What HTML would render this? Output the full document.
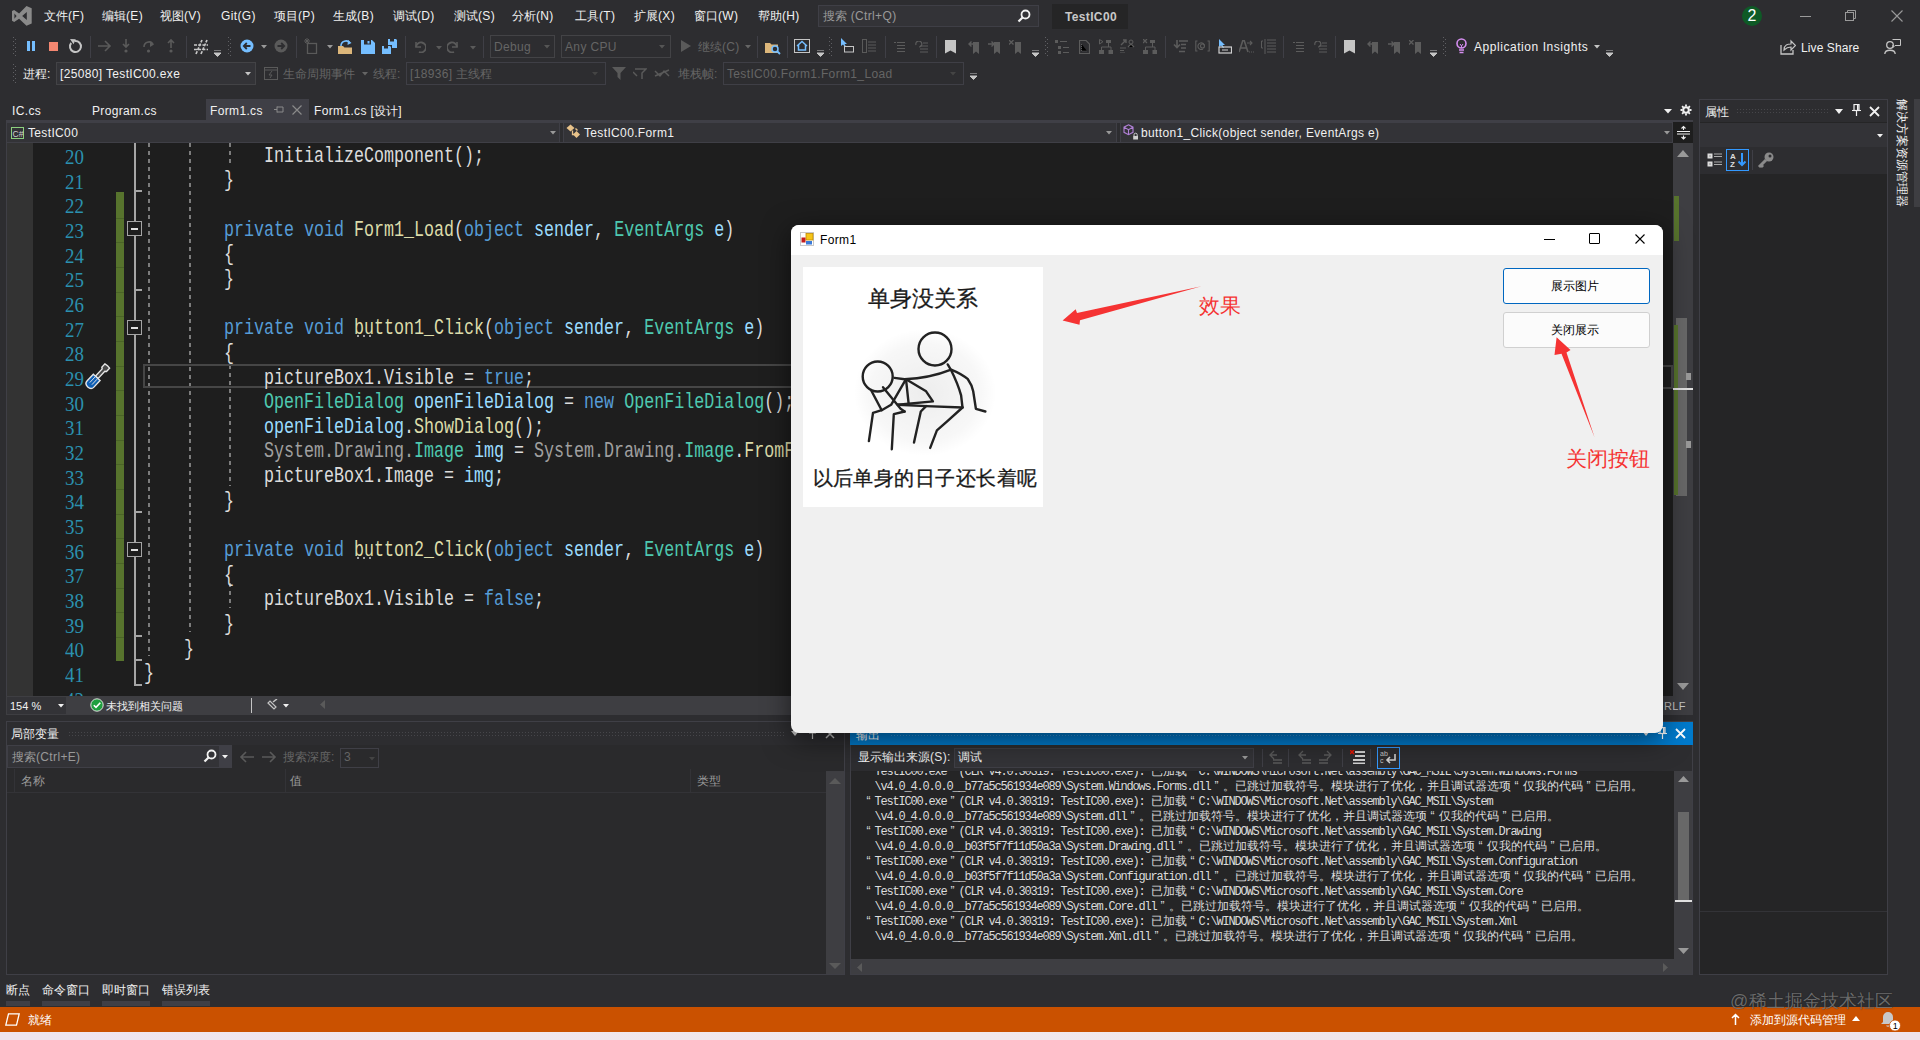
<!DOCTYPE html>
<html><head><meta charset="utf-8"><style>
*{box-sizing:border-box;margin:0;padding:0}
html,body{width:1920px;height:1040px;overflow:hidden}
body{background:#2d2d30;position:relative;font-family:"Liberation Sans",sans-serif;font-size:12px;color:#f1f1f1}
.a{position:absolute;white-space:nowrap}
.code{position:absolute;left:144px;top:144.6px;font-family:"Liberation Mono",monospace;font-size:22px;transform:scaleX(.7576);transform-origin:0 0;color:#dcdcdc}
.code div{height:24.67px;line-height:24.67px;white-space:pre}
.kw{color:#569cd6}.ty{color:#4ec9b0}.me{color:#dcdcaa}.pa{color:#9cdcfe}.gr{color:#a0a0a0}
.ln{position:absolute;font-family:"Liberation Serif",serif;font-size:21px;color:#2b91af;transform:scaleX(.9);transform-origin:100% 0;text-align:right;width:60px;line-height:24.67px;height:24.67px}
.out{position:absolute;font-family:"Liberation Mono",monospace;font-size:12px;line-height:15px;color:#dcdcdc;white-space:pre}
.out i{font-style:normal;display:inline-block;width:12px;text-align:center;font-family:"Liberation Sans",sans-serif}
.out b{font-weight:normal;letter-spacing:-1.2px}
</style></head><body>
<svg class="a" style="left:11px;top:5px;" width="22" height="22" viewBox="0 0 22 22"><path d="M15.5 1 L20.7 3.2 V18.5 L15.5 20.7 L8.1 13.7 L3.15 16.9 L1 15.8 V5.9 L3.15 5.1 L8.1 8.6 Z M15.8 7 V15 L11.2 11 Z M3.4 8.6 V13.7 L5.6 11.1 Z" fill="#8a8a8a" fill-rule="evenodd"/></svg>
<div class="a" style="left:44px;top:10.34px;font-size:12px;line-height:12px;color:#f1f1f1;">文件<span style="letter-spacing:0.35px">(F)</span></div>
<div class="a" style="left:102px;top:10.34px;font-size:12px;line-height:12px;color:#f1f1f1;">编辑<span style="letter-spacing:0.35px">(E)</span></div>
<div class="a" style="left:160px;top:10.34px;font-size:12px;line-height:12px;color:#f1f1f1;">视图<span style="letter-spacing:0.35px">(V)</span></div>
<div class="a" style="left:221px;top:10.34px;font-size:12px;line-height:12px;color:#f1f1f1;"><span style="letter-spacing:0.35px">Git(G)</span></div>
<div class="a" style="left:274px;top:10.34px;font-size:12px;line-height:12px;color:#f1f1f1;">项目<span style="letter-spacing:0.35px">(P)</span></div>
<div class="a" style="left:333px;top:10.34px;font-size:12px;line-height:12px;color:#f1f1f1;">生成<span style="letter-spacing:0.35px">(B)</span></div>
<div class="a" style="left:393px;top:10.34px;font-size:12px;line-height:12px;color:#f1f1f1;">调试<span style="letter-spacing:0.35px">(D)</span></div>
<div class="a" style="left:454px;top:10.34px;font-size:12px;line-height:12px;color:#f1f1f1;">测试<span style="letter-spacing:0.35px">(S)</span></div>
<div class="a" style="left:512px;top:10.34px;font-size:12px;line-height:12px;color:#f1f1f1;">分析<span style="letter-spacing:0.35px">(N)</span></div>
<div class="a" style="left:575px;top:10.34px;font-size:12px;line-height:12px;color:#f1f1f1;">工具<span style="letter-spacing:0.35px">(T)</span></div>
<div class="a" style="left:634px;top:10.34px;font-size:12px;line-height:12px;color:#f1f1f1;">扩展<span style="letter-spacing:0.35px">(X)</span></div>
<div class="a" style="left:694px;top:10.34px;font-size:12px;line-height:12px;color:#f1f1f1;">窗口<span style="letter-spacing:0.35px">(W)</span></div>
<div class="a" style="left:758px;top:10.34px;font-size:12px;line-height:12px;color:#f1f1f1;">帮助<span style="letter-spacing:0.35px">(H)</span></div>
<div class="a" style="left:818px;top:5px;width:221px;height:22px;background:#333337;border:1px solid #3f3f46;"></div>
<div class="a" style="left:823px;top:10.34px;font-size:12px;line-height:12px;color:#999999;">搜索<span style="letter-spacing:0.35px"> (Ctrl+Q)</span></div>
<svg class="a" style="left:1017px;top:9px;" width="14" height="14" viewBox="0 0 14 14"><circle cx="8.5" cy="5.5" r="4" fill="none" stroke="#f1f1f1" stroke-width="1.8"/><path d="M5.8 8.2 L1.5 12.5" stroke="#f1f1f1" stroke-width="2.2"/></svg>
<div class="a" style="left:1052px;top:4px;width:76px;height:25px;background:#252526;"></div>
<div class="a" style="left:1065px;top:10.84px;font-size:12px;line-height:12px;color:#c8c8c8;font-weight:bold;"><span style="letter-spacing:0.35px">TestIC00</span></div>
<div class="a" style="left:1742px;top:6px;width:20px;height:20px;border-radius:10px;background:#0e5a26;color:#fff;font-size:16px;line-height:20px;text-align:center">2</div>
<div class="a" style="left:1800px;top:16px;width:11px;height:1px;background:#9a9a9a;"></div>
<svg class="a" style="left:1845px;top:10px;" width="12" height="12" viewBox="0 0 12 12"><rect x="0.5" y="2.5" width="8" height="8" fill="none" stroke="#9a9a9a"/><path d="M2.5 2.5 V0.5 H10.5 V8.5 H8.5" fill="none" stroke="#9a9a9a"/></svg>
<svg class="a" style="left:1891px;top:10px;" width="12" height="12" viewBox="0 0 12 12"><path d="M0.5 0.5 L11.5 11.5 M11.5 0.5 L0.5 11.5" stroke="#9a9a9a" stroke-width="1.1"/></svg>
<svg class="a" style="left:13px;top:37px;" width="3" height="20" viewBox="0 0 3 20"><rect x="0" y="0" width="1" height="1" fill="#606064"/><rect x="2" y="2" width="1" height="1" fill="#606064"/><rect x="0" y="4" width="1" height="1" fill="#606064"/><rect x="2" y="6" width="1" height="1" fill="#606064"/><rect x="0" y="8" width="1" height="1" fill="#606064"/><rect x="2" y="10" width="1" height="1" fill="#606064"/><rect x="0" y="12" width="1" height="1" fill="#606064"/><rect x="2" y="14" width="1" height="1" fill="#606064"/><rect x="0" y="16" width="1" height="1" fill="#606064"/><rect x="2" y="18" width="1" height="1" fill="#606064"/></svg>
<div class="a" style="left:27px;top:41px;width:3px;height:10px;background:#75beff;"></div>
<div class="a" style="left:32px;top:41px;width:3px;height:10px;background:#75beff;"></div>
<div class="a" style="left:49px;top:42px;width:9px;height:9px;background:#f48771;"></div>
<svg class="a" style="left:67px;top:38px;" width="16" height="16" viewBox="0 0 16 16"><path d="M4.2 5 A5.5 5.5 0 1 0 8 3" fill="none" stroke="#c5c5c5" stroke-width="2"/><path d="M3 1 L8.8 1.2 L6.5 6.2Z" fill="#c5c5c5"/></svg>
<div class="a" style="left:90px;top:36px;width:1px;height:22px;background:#3f3f46;"></div>
<svg class="a" style="left:97px;top:39px;" width="16" height="14" viewBox="0 0 16 14"><path d="M1 7 H13 M8 2 L13 7 L8 12" fill="none" stroke="#5a5a5a" stroke-width="1.6"/></svg>
<svg class="a" style="left:121px;top:38px;" width="10" height="16" viewBox="0 0 10 16"><path d="M5 1 V9 M2 6 L5 9 L8 6" fill="none" stroke="#5a5a5a" stroke-width="1.6"/><circle cx="5" cy="13" r="1.6" fill="#5a5a5a"/></svg>
<svg class="a" style="left:142px;top:38px;" width="14" height="16" viewBox="0 0 14 16"><path d="M2 9 A5 5 0 0 1 11 6" fill="none" stroke="#5a5a5a" stroke-width="1.6"/><path d="M8 3 L12 6.5 L8 9" fill="#5a5a5a"/><circle cx="6.5" cy="13" r="1.6" fill="#5a5a5a"/></svg>
<svg class="a" style="left:166px;top:38px;" width="10" height="16" viewBox="0 0 10 16"><path d="M5 10 V2 M2 5 L5 2 L8 5" fill="none" stroke="#5a5a5a" stroke-width="1.6"/><circle cx="5" cy="13" r="1.6" fill="#5a5a5a"/></svg>
<div class="a" style="left:186px;top:36px;width:1px;height:22px;background:#3f3f46;"></div>
<svg class="a" style="left:193px;top:39px;" width="16" height="16" viewBox="0 0 16 16"><path d="M3 15 L9 1 M8 15 L14 1 M1 6 H15 M1 10.5 H15" stroke="#c8c8c8" stroke-width="1.7" stroke-dasharray="3 1.2"/></svg>
<svg class="a" style="left:214px;top:50px;" width="7" height="7" viewBox="0 0 7 7"><path d="M0 0 H7 M0 3 H7 L3.5 6.5Z" stroke="#c5c5c5" fill="#c5c5c5" stroke-width="1"/></svg>
<svg class="a" style="left:228px;top:37px;" width="3" height="20" viewBox="0 0 3 20"><rect x="0" y="0" width="1" height="1" fill="#606064"/><rect x="2" y="2" width="1" height="1" fill="#606064"/><rect x="0" y="4" width="1" height="1" fill="#606064"/><rect x="2" y="6" width="1" height="1" fill="#606064"/><rect x="0" y="8" width="1" height="1" fill="#606064"/><rect x="2" y="10" width="1" height="1" fill="#606064"/><rect x="0" y="12" width="1" height="1" fill="#606064"/><rect x="2" y="14" width="1" height="1" fill="#606064"/><rect x="0" y="16" width="1" height="1" fill="#606064"/><rect x="2" y="18" width="1" height="1" fill="#606064"/></svg>
<svg class="a" style="left:240px;top:39px;" width="14" height="14" viewBox="0 0 14 14"><circle cx="7" cy="7" r="6.5" fill="#75beff"/><path d="M10.5 7 H4 M6.8 4 L3.8 7 L6.8 10" fill="none" stroke="#2d2d30" stroke-width="1.8"/></svg>
<svg class="a" style="left:261px;top:45px;" width="6" height="4" viewBox="0 0 6 4"><path d="M0 0 H6 L3 3.5Z" fill="#999"/></svg>
<svg class="a" style="left:274px;top:39px;" width="14" height="14" viewBox="0 0 14 14"><circle cx="7" cy="7" r="6.5" fill="#5a5a5a"/><path d="M3.5 7 H10 M7.2 4 L10.2 7 L7.2 10" fill="none" stroke="#2d2d30" stroke-width="1.8"/></svg>
<div class="a" style="left:296px;top:36px;width:1px;height:22px;background:#3f3f46;"></div>
<svg class="a" style="left:304px;top:38px;" width="14" height="16" viewBox="0 0 14 16"><rect x="3.5" y="5.5" width="9" height="10" fill="none" stroke="#5a5a5a" stroke-width="1.3"/><path d="M1 1 L5 5 M1 5 L5 1 M3 0 V6 M0 3 H6" stroke="#5a5a5a"/></svg>
<svg class="a" style="left:327px;top:45px;" width="6" height="4" viewBox="0 0 6 4"><path d="M0 0 H6 L3 3.5Z" fill="#999"/></svg>
<svg class="a" style="left:337px;top:39px;" width="18" height="16" viewBox="0 0 18 16"><path d="M1 7 H6 L7.5 8.5 H15 V15 H1 Z" fill="#dcb67a"/><path d="M4 7 A5 5 0 0 1 13 4" fill="none" stroke="#75beff" stroke-width="1.6"/><path d="M11 1 L14.5 4 L10.5 6Z" fill="#75beff"/></svg>
<svg class="a" style="left:361px;top:40px;" width="14" height="14" viewBox="0 0 14 14"><path d="M0 0 H11 L14 3 V14 H0Z" fill="#75beff"/><rect x="3" y="0" width="7" height="4.5" fill="#2d2d30"/><rect x="6.5" y="1" width="2" height="2.5" fill="#75beff"/></svg>
<svg class="a" style="left:382px;top:39px;" width="16" height="16" viewBox="0 0 16 16"><path d="M0 7 H8 L9 8 V15 H0Z" fill="#75beff"/><path d="M6 0 H14 L15 1 V9 H10 V6 H6Z" fill="#75beff"/><rect x="2" y="7" width="4" height="2.5" fill="#2d2d30"/><rect x="8" y="0" width="4" height="2.5" fill="#2d2d30"/></svg>
<div class="a" style="left:405px;top:36px;width:1px;height:22px;background:#3f3f46;"></div>
<svg class="a" style="left:413px;top:39px;" width="13" height="14" viewBox="0 0 13 14"><path d="M3 3 V8 H8" fill="none" stroke="#5a5a5a" stroke-width="1.6"/><path d="M3 8 A5 5 0 1 1 6 13" fill="none" stroke="#5a5a5a" stroke-width="1.8"/></svg>
<svg class="a" style="left:436px;top:46px;" width="6" height="4" viewBox="0 0 6 4"><path d="M0 0 H6 L3 3.5Z" fill="#5a5a5a"/></svg>
<svg class="a" style="left:447px;top:39px;" width="13" height="14" viewBox="0 0 13 14"><path d="M10 3 V8 H5" fill="none" stroke="#5a5a5a" stroke-width="1.6"/><path d="M10 8 A5 5 0 1 0 7 13" fill="none" stroke="#5a5a5a" stroke-width="1.8"/></svg>
<svg class="a" style="left:470px;top:46px;" width="6" height="4" viewBox="0 0 6 4"><path d="M0 0 H6 L3 3.5Z" fill="#5a5a5a"/></svg>
<div class="a" style="left:483px;top:36px;width:1px;height:22px;background:#3f3f46;"></div>
<div class="a" style="left:490px;top:35px;width:65px;height:23px;border:1px solid #434346;"></div>
<div class="a" style="left:494px;top:41.34px;font-size:12px;line-height:12px;color:#656565;"><span style="letter-spacing:0.35px">Debug</span></div>
<svg class="a" style="left:544px;top:45px;" width="6" height="4" viewBox="0 0 6 4"><path d="M0 0 H6 L3 3.5Z" fill="#555"/></svg>
<div class="a" style="left:561px;top:35px;width:110px;height:23px;border:1px solid #434346;"></div>
<div class="a" style="left:565px;top:41.34px;font-size:12px;line-height:12px;color:#656565;"><span style="letter-spacing:0.35px">Any CPU</span></div>
<svg class="a" style="left:659px;top:45px;" width="6" height="4" viewBox="0 0 6 4"><path d="M0 0 H6 L3 3.5Z" fill="#555"/></svg>
<svg class="a" style="left:681px;top:40px;" width="10" height="12" viewBox="0 0 10 12"><path d="M0 0 L10 6 L0 12Z" fill="#5a5a5a"/></svg>
<div class="a" style="left:698px;top:41.34px;font-size:12px;line-height:12px;color:#656565;">继续<span style="letter-spacing:0.35px">(C)</span></div>
<svg class="a" style="left:745px;top:45px;" width="6" height="4" viewBox="0 0 6 4"><path d="M0 0 H6 L3 3.5Z" fill="#656565"/></svg>
<div class="a" style="left:757px;top:36px;width:1px;height:22px;background:#3f3f46;"></div>
<svg class="a" style="left:765px;top:39px;" width="16" height="16" viewBox="0 0 16 16"><path d="M0 4 H5 L6.5 5.5 H13 V14 H0Z" fill="#dcb67a"/><circle cx="10" cy="10" r="3" fill="#2d2d30" stroke="#75beff" stroke-width="1.5"/><path d="M12 12 L15 15" stroke="#75beff" stroke-width="1.8"/></svg>
<div class="a" style="left:787px;top:36px;width:1px;height:22px;background:#3f3f46;"></div>
<svg class="a" style="left:794px;top:39px;" width="16" height="14" viewBox="0 0 16 14"><rect x="0.5" y="0.5" width="15" height="13" fill="none" stroke="#c5c5c5"/><path d="M3 7 L8 2.5 L13 7 M4.5 6 V11 H11.5 V6" fill="none" stroke="#75beff" stroke-width="1.5"/></svg>
<svg class="a" style="left:817px;top:50px;" width="7" height="7" viewBox="0 0 7 7"><path d="M0 0 H7 M0 3 H7 L3.5 6.5Z" stroke="#c5c5c5" fill="#c5c5c5"/></svg>
<svg class="a" style="left:829px;top:37px;" width="3" height="20" viewBox="0 0 3 20"><rect x="0" y="0" width="1" height="1" fill="#606064"/><rect x="2" y="2" width="1" height="1" fill="#606064"/><rect x="0" y="4" width="1" height="1" fill="#606064"/><rect x="2" y="6" width="1" height="1" fill="#606064"/><rect x="0" y="8" width="1" height="1" fill="#606064"/><rect x="2" y="10" width="1" height="1" fill="#606064"/><rect x="0" y="12" width="1" height="1" fill="#606064"/><rect x="2" y="14" width="1" height="1" fill="#606064"/><rect x="0" y="16" width="1" height="1" fill="#606064"/><rect x="2" y="18" width="1" height="1" fill="#606064"/></svg>
<svg class="a" style="left:840px;top:38px;" width="14" height="15" viewBox="0 0 14 15"><path d="M1 0 L1 8 L3 6.5 L5 9 L6 8.5 L4.5 6 L7 6Z" fill="#75beff"/><rect x="4.5" y="8.5" width="9" height="5.5" fill="none" stroke="#c5c5c5"/></svg>
<svg class="a" style="left:862px;top:39px;" width="14" height="14" viewBox="0 0 14 14"><rect x="0.5" y="0.5" width="4" height="13" fill="none" stroke="#5a5a5a"/><path d="M6 3 H14 M6 6 H14 M6 9 H14 M6 12 H14" stroke="#5a5a5a"/></svg>
<div class="a" style="left:885px;top:36px;width:1px;height:22px;background:#3f3f46;"></div>
<svg class="a" style="left:894px;top:42px;" width="11" height="10" viewBox="0 0 11 10"><path d="M0 0.5 H2 M3 0.5 H11 M3 3.5 H11 M3 6.5 H11 M3 9.5 H11" stroke="#5c5c5c" stroke-width="1.2"/></svg>
<svg class="a" style="left:915px;top:41px;" width="13" height="12" viewBox="0 0 13 12"><path d="M1 4 A3 3 0 1 1 4 6" fill="none" stroke="#5c5c5c" stroke-width="1.2"/><path d="M5 5 H13 M5 8 H13 M5 11 H13 M8 2 H13" stroke="#5c5c5c" stroke-width="1.2"/></svg>
<div class="a" style="left:936px;top:36px;width:1px;height:22px;background:#3f3f46;"></div>
<svg class="a" style="left:945px;top:40px;" width="11" height="14" viewBox="0 0 11 14"><path d="M0 0 H11 V13.5 L5.5 10.5 L0 13.5Z" fill="#c5c5c5"/></svg>
<svg class="a" style="left:968px;top:40px;" width="12" height="14" viewBox="0 0 12 14"><path d="M5 2 H11 V14 L8 11.5 L5 14Z" fill="#5c5c5c"/><path d="M7 4 H1 M3.5 1.5 L1 4 L3.5 6.5" fill="none" stroke="#5c5c5c" stroke-width="1.4"/></svg>
<svg class="a" style="left:988px;top:40px;" width="13" height="14" viewBox="0 0 13 14"><path d="M6 2 H12 V14 L9 11.5 L6 14Z" fill="#5c5c5c"/><path d="M0 4 H6 M3.5 1.5 L6 4 L3.5 6.5" fill="none" stroke="#5c5c5c" stroke-width="1.4"/></svg>
<svg class="a" style="left:1009px;top:40px;" width="13" height="14" viewBox="0 0 13 14"><path d="M6 2 H12 V14 L9 11.5 L6 14Z" fill="#5c5c5c"/><path d="M0 0 L4.5 4.5 M4.5 0 L0 4.5" stroke="#5c5c5c" stroke-width="1.3"/></svg>
<svg class="a" style="left:1032px;top:50px;" width="7" height="7" viewBox="0 0 7 7"><path d="M0 0 H7 M0 3 H7 L3.5 6.5Z" stroke="#c5c5c5" fill="#c5c5c5"/></svg>
<svg class="a" style="left:1045px;top:37px;" width="3" height="20" viewBox="0 0 3 20"><rect x="0" y="0" width="1" height="1" fill="#606064"/><rect x="2" y="2" width="1" height="1" fill="#606064"/><rect x="0" y="4" width="1" height="1" fill="#606064"/><rect x="2" y="6" width="1" height="1" fill="#606064"/><rect x="0" y="8" width="1" height="1" fill="#606064"/><rect x="2" y="10" width="1" height="1" fill="#606064"/><rect x="0" y="12" width="1" height="1" fill="#606064"/><rect x="2" y="14" width="1" height="1" fill="#606064"/><rect x="0" y="16" width="1" height="1" fill="#606064"/><rect x="2" y="18" width="1" height="1" fill="#606064"/></svg>
<svg class="a" style="left:1055px;top:40px;" width="14" height="14" viewBox="0 0 14 14"><rect x="0" y="0" width="3" height="3" fill="#5c5c5c"/><rect x="3" y="6" width="3" height="3" fill="#5c5c5c"/><rect x="3" y="11" width="3" height="3" fill="#5c5c5c"/><path d="M5 1.5 H12 M8 7.5 H14 M8 12.5 H14" stroke="#5c5c5c" stroke-width="1.2"/></svg>
<svg class="a" style="left:1079px;top:40px;" width="11" height="14" viewBox="0 0 11 14"><path d="M0.5 0.5 H7 L10.5 4 V13.5 H0.5Z" fill="none" stroke="#5c5c5c" stroke-width="1.2"/><path d="M2.5 4 V11 H8" stroke="#5c5c5c" stroke-dasharray="1 1"/></svg>
<svg class="a" style="left:1099px;top:39px;" width="14" height="15" viewBox="0 0 14 15"><path d="M0.5 0.5 V5 L4 2.7Z" fill="none" stroke="#5c5c5c"/><rect x="7" y="1" width="5" height="3" fill="#5c5c5c"/><path d="M9.5 4 V8 M2.5 8 H12 M2.5 8 V11 M12 8 V11" stroke="#5c5c5c"/><rect x="0" y="11" width="5" height="4" fill="#5c5c5c"/><rect x="9.5" y="11" width="5" height="4" fill="#5c5c5c"/></svg>
<svg class="a" style="left:1120px;top:39px;" width="15" height="14" viewBox="0 0 15 14"><path d="M1 6 L6 1 M3 1 H6 V4" fill="none" stroke="#5c5c5c" stroke-width="1.4"/><circle cx="11" cy="3" r="2" fill="none" stroke="#5c5c5c"/><path d="M8 8 L11 5 L14 8 M0 9 H6 M0 11.5 H4 M0 14 H5" stroke="#5c5c5c" stroke-width="1.2"/></svg>
<svg class="a" style="left:1143px;top:39px;" width="14" height="15" viewBox="0 0 14 15"><path d="M0 0 L4 4 M4 0 L0 4" stroke="#5c5c5c" stroke-width="1.3"/><rect x="7" y="1" width="5" height="3" fill="#5c5c5c"/><path d="M9.5 4 V8 M2.5 8 H12 M2.5 8 V11 M12 8 V11" stroke="#5c5c5c"/><rect x="0" y="11" width="5" height="4" fill="#5c5c5c"/><rect x="9.5" y="11" width="5" height="4" fill="#5c5c5c"/></svg>
<div class="a" style="left:1165px;top:36px;width:1px;height:22px;background:#3f3f46;"></div>
<svg class="a" style="left:1173px;top:40px;" width="15" height="13" viewBox="0 0 15 13"><path d="M4 0 V7 M1 4.5 L4 7.5 L7 4.5" fill="none" stroke="#5c5c5c" stroke-width="1.6"/><path d="M6 1 H15 M8 4.5 H13 M8 8 H13 M6 11.5 H12" stroke="#5c5c5c" stroke-width="1.3"/></svg>
<svg class="a" style="left:1195px;top:40px;" width="15" height="12" viewBox="0 0 15 12"><path d="M2.5 1 H0.8 V11 H2.5 M12.5 1 H14.2 V11 H12.5" fill="none" stroke="#5c5c5c" stroke-width="1.1"/><circle cx="7.5" cy="6" r="2" fill="none" stroke="#5c5c5c" stroke-width="1.1"/><path d="M9.5 6 A3.3 3.3 0 1 0 8 9" fill="none" stroke="#5c5c5c" stroke-width="1.1"/></svg>
<svg class="a" style="left:1218px;top:39px;" width="14" height="15" viewBox="0 0 14 15"><path d="M1 0 L1 8 L3 6.5 L5 9 L6 8.5 L4.5 6 L7 6Z" fill="#75beff"/><rect x="1" y="8" width="12.5" height="6" fill="none" stroke="#d0d0d0" stroke-width="1.2"/><path d="M4 11 H10" stroke="#d0d0d0"/></svg>
<svg class="a" style="left:1239px;top:40px;" width="15" height="13" viewBox="0 0 15 13"><path d="M0 12 L4 0 H5 L9 12 M2 8 H7" fill="none" stroke="#5c5c5c" stroke-width="1.6"/><path d="M8 3 H13 M11 1 L13 3 L11 5" fill="none" stroke="#5c5c5c" stroke-width="1.1"/><path d="M10 12 H15" stroke="#5c5c5c" stroke-dasharray="1 1"/></svg>
<svg class="a" style="left:1261px;top:39px;" width="15" height="15" viewBox="0 0 15 15"><path d="M2 2 H0.5 V9 H2 M4 0 V15" fill="none" stroke="#5c5c5c"/><path d="M6 1 H15 M6 4 H15 M6 7 H15 M6 10 H15 M6 13 H15" stroke="#5c5c5c" stroke-width="1.1"/></svg>
<div class="a" style="left:1283px;top:36px;width:1px;height:22px;background:#3f3f46;"></div>
<svg class="a" style="left:1293px;top:42px;" width="11" height="10" viewBox="0 0 11 10"><path d="M0 0.5 H2 M3 0.5 H11 M3 3.5 H11 M3 6.5 H11 M3 9.5 H11" stroke="#5c5c5c" stroke-width="1.2"/></svg>
<svg class="a" style="left:1314px;top:41px;" width="13" height="12" viewBox="0 0 13 12"><path d="M1 4 A3 3 0 1 1 4 6" fill="none" stroke="#5c5c5c" stroke-width="1.2"/><path d="M5 5 H13 M5 8 H13 M5 11 H13 M8 2 H13" stroke="#5c5c5c" stroke-width="1.2"/></svg>
<div class="a" style="left:1335px;top:36px;width:1px;height:22px;background:#3f3f46;"></div>
<svg class="a" style="left:1344px;top:40px;" width="11" height="14" viewBox="0 0 11 14"><path d="M0 0 H11 V13.5 L5.5 10.5 L0 13.5Z" fill="#c5c5c5"/></svg>
<svg class="a" style="left:1367px;top:40px;" width="12" height="14" viewBox="0 0 12 14"><path d="M5 2 H11 V14 L8 11.5 L5 14Z" fill="#5c5c5c"/><path d="M7 4 H1 M3.5 1.5 L1 4 L3.5 6.5" fill="none" stroke="#5c5c5c" stroke-width="1.4"/></svg>
<svg class="a" style="left:1388px;top:40px;" width="13" height="14" viewBox="0 0 13 14"><path d="M6 2 H12 V14 L9 11.5 L6 14Z" fill="#5c5c5c"/><path d="M0 4 H6 M3.5 1.5 L6 4 L3.5 6.5" fill="none" stroke="#5c5c5c" stroke-width="1.4"/></svg>
<svg class="a" style="left:1409px;top:40px;" width="13" height="14" viewBox="0 0 13 14"><path d="M6 2 H12 V14 L9 11.5 L6 14Z" fill="#5c5c5c"/><path d="M0 0 L4.5 4.5 M4.5 0 L0 4.5" stroke="#5c5c5c" stroke-width="1.3"/></svg>
<svg class="a" style="left:1430px;top:50px;" width="7" height="7" viewBox="0 0 7 7"><path d="M0 0 H7 M0 3 H7 L3.5 6.5Z" stroke="#c5c5c5" fill="#c5c5c5"/></svg>
<svg class="a" style="left:1443px;top:37px;" width="3" height="20" viewBox="0 0 3 20"><rect x="0" y="0" width="1" height="1" fill="#606064"/><rect x="2" y="2" width="1" height="1" fill="#606064"/><rect x="0" y="4" width="1" height="1" fill="#606064"/><rect x="2" y="6" width="1" height="1" fill="#606064"/><rect x="0" y="8" width="1" height="1" fill="#606064"/><rect x="2" y="10" width="1" height="1" fill="#606064"/><rect x="0" y="12" width="1" height="1" fill="#606064"/><rect x="2" y="14" width="1" height="1" fill="#606064"/><rect x="0" y="16" width="1" height="1" fill="#606064"/><rect x="2" y="18" width="1" height="1" fill="#606064"/></svg>
<svg class="a" style="left:1456px;top:38px;" width="11" height="16" viewBox="0 0 11 16"><circle cx="5.5" cy="5.5" r="4.5" fill="none" stroke="#d58ef0" stroke-width="1.6"/><path d="M3 12 H8 M3.5 14.5 H7.5" stroke="#d58ef0" stroke-width="1.4"/><path d="M4 6 L5.5 8 L7 6 M5.5 8 V10" stroke="#d58ef0" fill="none"/></svg>
<div class="a" style="left:1474px;top:41.34px;font-size:12px;line-height:12px;color:#f1f1f1;"><span style="letter-spacing:0.55px">Application Insights</span></div>
<svg class="a" style="left:1594px;top:45px;" width="6" height="4" viewBox="0 0 6 4"><path d="M0 0 H6 L3 3.5Z" fill="#c5c5c5"/></svg>
<svg class="a" style="left:1606px;top:50px;" width="7" height="7" viewBox="0 0 7 7"><path d="M0 0 H7 M0 3 H7 L3.5 6.5Z" stroke="#c5c5c5" fill="#c5c5c5"/></svg>
<svg class="a" style="left:1780px;top:39px;" width="16" height="16" viewBox="0 0 16 16"><path d="M1 6 V15 H13 V11" fill="none" stroke="#c5c5c5" stroke-width="1.3"/><path d="M4 11 C4 6 8 5 11 5 V2 L15.5 6.5 L11 11 V8 C8 8 6 9 4 11Z" fill="none" stroke="#c5c5c5" stroke-width="1.2"/></svg>
<div class="a" style="left:1801px;top:42.34px;font-size:12px;line-height:12px;color:#f1f1f1;"><span style="letter-spacing:0.1px">Live Share</span></div>
<svg class="a" style="left:1884px;top:39px;" width="17" height="16" viewBox="0 0 17 16"><circle cx="6" cy="6" r="3.3" fill="none" stroke="#c5c5c5" stroke-width="1.3"/><path d="M0.8 15 C1 10 11 10 11.2 15" fill="none" stroke="#c5c5c5" stroke-width="1.3"/><path d="M8.5 0.5 H16.5 V6.5 H11 L9 8.5 V6.5 H8.5" fill="none" stroke="#c5c5c5"/></svg>
<svg class="a" style="left:13px;top:64px;" width="3" height="20" viewBox="0 0 3 20"><rect x="0" y="0" width="1" height="1" fill="#606064"/><rect x="2" y="2" width="1" height="1" fill="#606064"/><rect x="0" y="4" width="1" height="1" fill="#606064"/><rect x="2" y="6" width="1" height="1" fill="#606064"/><rect x="0" y="8" width="1" height="1" fill="#606064"/><rect x="2" y="10" width="1" height="1" fill="#606064"/><rect x="0" y="12" width="1" height="1" fill="#606064"/><rect x="2" y="14" width="1" height="1" fill="#606064"/><rect x="0" y="16" width="1" height="1" fill="#606064"/><rect x="2" y="18" width="1" height="1" fill="#606064"/></svg>
<div class="a" style="left:23px;top:68.34px;font-size:12px;line-height:12px;color:#f1f1f1;">进程<span style="letter-spacing:0.35px">:</span></div>
<div class="a" style="left:56px;top:62px;width:200px;height:23px;background:#333337;border:1px solid #434346;"></div>
<div class="a" style="left:60px;top:68.34px;font-size:12px;line-height:12px;color:#f1f1f1;"><span style="letter-spacing:0.35px">[25080] TestIC00.exe</span></div>
<svg class="a" style="left:245px;top:72px;" width="6" height="4" viewBox="0 0 6 4"><path d="M0 0 H6 L3 3.5Z" fill="#c5c5c5"/></svg>
<svg class="a" style="left:264px;top:67px;" width="14" height="13" viewBox="0 0 14 13"><rect x="0.5" y="0.5" width="13" height="12" fill="none" stroke="#5a5a5a"/><path d="M0.5 3 H13.5 M8 4 L5 8 H8 L6 11" fill="none" stroke="#5a5a5a"/></svg>
<div class="a" style="left:283px;top:68.34px;font-size:12px;line-height:12px;color:#656565;">生命周期事件</div>
<svg class="a" style="left:362px;top:72px;" width="6" height="4" viewBox="0 0 6 4"><path d="M0 0 H6 L3 3.5Z" fill="#656565"/></svg>
<div class="a" style="left:373px;top:68.34px;font-size:12px;line-height:12px;color:#656565;">线程<span style="letter-spacing:0.35px">:</span></div>
<div class="a" style="left:406px;top:62px;width:200px;height:23px;border:1px solid #3f3f46;"></div>
<div class="a" style="left:410px;top:68.34px;font-size:12px;line-height:12px;color:#656565;"><span style="letter-spacing:0.35px">[18936] </span>主线程</div>
<svg class="a" style="left:592px;top:72px;" width="6" height="4" viewBox="0 0 6 4"><path d="M0 0 H6 L3 3.5Z" fill="#444"/></svg>
<svg class="a" style="left:612px;top:67px;" width="14" height="13" viewBox="0 0 14 13"><path d="M0 0 H14 L8.5 6 V13 L5.5 10 V6Z" fill="#5a5a5a"/></svg>
<svg class="a" style="left:633px;top:67px;" width="14" height="13" viewBox="0 0 14 13"><path d="M2 2 H13 L9 6 V12 M0 5 L4 9" fill="none" stroke="#5a5a5a" stroke-width="1.5"/></svg>
<svg class="a" style="left:654px;top:67px;" width="16" height="13" viewBox="0 0 16 13"><path d="M1 4 L6 9 L10 4 L15 9 M1 9 L15 3" fill="none" stroke="#5a5a5a" stroke-width="1.5"/></svg>
<div class="a" style="left:678px;top:68.34px;font-size:12px;line-height:12px;color:#656565;">堆栈帧<span style="letter-spacing:0.35px">:</span></div>
<div class="a" style="left:723px;top:62px;width:241px;height:23px;border:1px solid #3f3f46;"></div>
<div class="a" style="left:727px;top:68.34px;font-size:12px;line-height:12px;color:#656565;"><span style="letter-spacing:0.35px">TestIC00.Form1.Form1_Load</span></div>
<svg class="a" style="left:950px;top:72px;" width="6" height="4" viewBox="0 0 6 4"><path d="M0 0 H6 L3 3.5Z" fill="#444"/></svg>
<svg class="a" style="left:970px;top:73px;" width="7" height="7" viewBox="0 0 7 7"><path d="M0 0 H7 M0 3 H7 L3.5 6.5Z" stroke="#c5c5c5" fill="#c5c5c5"/></svg>
<div class="a" style="left:12px;top:104.84px;font-size:12px;line-height:12px;color:#f1f1f1;"><span style="letter-spacing:0.35px">IC.cs</span></div>
<div class="a" style="left:92px;top:104.84px;font-size:12px;line-height:12px;color:#f1f1f1;"><span style="letter-spacing:0.35px">Program.cs</span></div>
<div class="a" style="left:206px;top:99px;width:103px;height:21px;background:#3f3f46;"></div>
<div class="a" style="left:210px;top:104.84px;font-size:12px;line-height:12px;color:#f1f1f1;"><span style="letter-spacing:0.35px">Form1.cs</span></div>
<svg class="a" style="left:274px;top:105px;" width="10" height="9" viewBox="0 0 10 9"><path d="M0 4.5 H3 M3 1.5 V7.5 M3 2 H9 V7 H3" fill="none" stroke="#8a8a8a"/></svg>
<svg class="a" style="left:292px;top:105px;" width="10" height="10" viewBox="0 0 10 10"><path d="M0.5 0.5 L9.5 9.5 M9.5 0.5 L0.5 9.5" stroke="#8a8a8a" stroke-width="1.2"/></svg>
<div class="a" style="left:314px;top:104.84px;font-size:12px;line-height:12px;color:#f1f1f1;"><span style="letter-spacing:0.35px">Form1.cs [</span>设计<span style="letter-spacing:0.35px">]</span></div>
<svg class="a" style="left:1664px;top:109px;" width="8" height="5" viewBox="0 0 8 5"><path d="M0 0 H8 L4 4.5Z" fill="#f1f1f1"/></svg>
<svg class="a" style="left:1680px;top:104px;" width="12" height="12" viewBox="0 0 12 12"><circle cx="6" cy="6" r="2.8" fill="none" stroke="#f1f1f1" stroke-width="2"/><path d="M6 0.5 V11.5 M0.5 6 H11.5 M2.1 2.1 L9.9 9.9 M9.9 2.1 L2.1 9.9" stroke="#f1f1f1" stroke-width="1.8" stroke-dasharray="2 7"/></svg>
<div class="a" style="left:6px;top:120px;width:1687px;height:3px;background:#3f3f46;"></div>
<div class="a" style="left:6px;top:120px;width:1667px;height:24px;background:#3f3f46;"></div>
<div class="a" style="left:7px;top:123px;width:552px;height:19px;background:#333337;"></div>
<div class="a" style="left:564px;top:123px;width:552px;height:19px;background:#333337;"></div>
<div class="a" style="left:1121px;top:123px;width:551px;height:19px;background:#333337;"></div>
<div class="a" style="left:560px;top:123px;width:3px;height:19px;background:#2d2d30;"></div>
<div class="a" style="left:1117px;top:123px;width:3px;height:19px;background:#2d2d30;"></div>
<svg class="a" style="left:11px;top:127px;" width="13" height="12" viewBox="0 0 13 12"><rect x="0.5" y="0.5" width="12" height="11" fill="none" stroke="#8ccf7e"/><text x="1.5" y="9.5" font-size="8.5" fill="#d0d0d0" font-family="Liberation Sans">C#</text></svg>
<div class="a" style="left:28px;top:126.84px;font-size:12px;line-height:12px;color:#f1f1f1;"><span style="letter-spacing:0.35px">TestIC00</span></div>
<svg class="a" style="left:550px;top:131px;" width="6" height="4" viewBox="0 0 6 4"><path d="M0 0 H6 L3 3.5Z" fill="#999"/></svg>
<svg class="a" style="left:566px;top:124px;" width="15" height="15" viewBox="0 0 15 15"><path d="M4.5 0.5 L8.5 4 L4.5 7.5 L0.5 4Z" fill="#e8c28a"/><path d="M10.5 7 L14 10.5 L10.5 14 L7 10.5Z" fill="#e8c28a"/><path d="M6.5 6.5 V10.5 H8.5" fill="none" stroke="#e8c28a" stroke-width="1.3"/><path d="M9.5 4.5 L11.5 6.5" stroke="#e8c28a" stroke-width="1.5"/></svg>
<div class="a" style="left:584px;top:126.84px;font-size:12px;line-height:12px;color:#f1f1f1;"><span style="letter-spacing:0.35px">TestIC00.Form1</span></div>
<svg class="a" style="left:1106px;top:131px;" width="6" height="4" viewBox="0 0 6 4"><path d="M0 0 H6 L3 3.5Z" fill="#999"/></svg>
<svg class="a" style="left:1123px;top:124px;" width="17" height="16" viewBox="0 0 17 16"><path d="M5.5 0.8 L10 3.2 V8.3 L5.5 10.7 L1 8.3 V3.2Z M1 3.2 L5.5 5.7 L10 3.2 M5.5 5.7 V10.7" fill="none" stroke="#b180d7" stroke-width="1.1"/><path d="M11 12 V10.8 A1.6 1.6 0 0 1 14.2 10.8 V12" fill="none" stroke="#d0d0d0" stroke-width="1"/><rect x="10.2" y="12" width="4.8" height="3.5" fill="#d0d0d0"/></svg>
<div class="a" style="left:1141px;top:126.84px;font-size:12px;line-height:12px;color:#f1f1f1;"><span style="letter-spacing:0.35px">button1_Click(object sender, EventArgs e)</span></div>
<svg class="a" style="left:1664px;top:131px;" width="6" height="4" viewBox="0 0 6 4"><path d="M0 0 H6 L3 3.5Z" fill="#999"/></svg>
<div class="a" style="left:1673px;top:122px;width:20px;height:21px;background:#1e1e1e;"></div>
<svg class="a" style="left:1675px;top:125px;" width="17" height="15" viewBox="0 0 17 15"><path d="M2 6.5 H15 M2 9 H15 M8.5 1.5 V5 M8.5 10.5 V14 M6.5 3.5 L8.5 1.5 L10.5 3.5 M6.5 12 L8.5 14 L10.5 12" fill="none" stroke="#f1f1f1" stroke-width="1.1"/></svg>
<div class="a" style="left:6px;top:143px;width:1667px;height:553px;background:#1e1e1e;"></div>
<div class="a" style="left:6px;top:143px;width:1px;height:553px;background:#3f3f46;"></div>
<div class="a" style="left:7px;top:143px;width:26px;height:553px;background:#333333;"></div>
<div class="ln" style="left:24px;top:145.00px">20</div>
<div class="ln" style="left:24px;top:169.67px">21</div>
<div class="ln" style="left:24px;top:194.34px">22</div>
<div class="ln" style="left:24px;top:219.01px">23</div>
<div class="ln" style="left:24px;top:243.68px">24</div>
<div class="ln" style="left:24px;top:268.35px">25</div>
<div class="ln" style="left:24px;top:293.02px">26</div>
<div class="ln" style="left:24px;top:317.69px">27</div>
<div class="ln" style="left:24px;top:342.36px">28</div>
<div class="ln" style="left:24px;top:367.03px">29</div>
<div class="ln" style="left:24px;top:391.70px">30</div>
<div class="ln" style="left:24px;top:416.37px">31</div>
<div class="ln" style="left:24px;top:441.04px">32</div>
<div class="ln" style="left:24px;top:465.71px">33</div>
<div class="ln" style="left:24px;top:490.38px">34</div>
<div class="ln" style="left:24px;top:515.05px">35</div>
<div class="ln" style="left:24px;top:539.72px">36</div>
<div class="ln" style="left:24px;top:564.39px">37</div>
<div class="ln" style="left:24px;top:589.06px">38</div>
<div class="ln" style="left:24px;top:613.73px">39</div>
<div class="ln" style="left:24px;top:638.40px">40</div>
<div class="ln" style="left:24px;top:663.07px">41</div>
<div class="ln" style="left:24px;top:687.74px">42</div>
<div class="a" style="left:116px;top:192px;width:8px;height:469px;background:#57732d;"></div>
<div class="a" style="left:116px;top:217.61px;width:8px;height:1px;background:#4a6327;"></div>
<div class="a" style="left:116px;top:242.28px;width:8px;height:1px;background:#4a6327;"></div>
<div class="a" style="left:116px;top:266.95px;width:8px;height:1px;background:#4a6327;"></div>
<div class="a" style="left:116px;top:291.62px;width:8px;height:1px;background:#4a6327;"></div>
<div class="a" style="left:116px;top:316.28999999999996px;width:8px;height:1px;background:#4a6327;"></div>
<div class="a" style="left:116px;top:340.96000000000004px;width:8px;height:1px;background:#4a6327;"></div>
<div class="a" style="left:116px;top:365.63px;width:8px;height:1px;background:#4a6327;"></div>
<div class="a" style="left:116px;top:390.3px;width:8px;height:1px;background:#4a6327;"></div>
<div class="a" style="left:116px;top:414.97px;width:8px;height:1px;background:#4a6327;"></div>
<div class="a" style="left:116px;top:439.64px;width:8px;height:1px;background:#4a6327;"></div>
<div class="a" style="left:116px;top:464.31000000000006px;width:8px;height:1px;background:#4a6327;"></div>
<div class="a" style="left:116px;top:488.98px;width:8px;height:1px;background:#4a6327;"></div>
<div class="a" style="left:116px;top:513.65px;width:8px;height:1px;background:#4a6327;"></div>
<div class="a" style="left:116px;top:538.32px;width:8px;height:1px;background:#4a6327;"></div>
<div class="a" style="left:116px;top:562.99px;width:8px;height:1px;background:#4a6327;"></div>
<div class="a" style="left:116px;top:587.6600000000001px;width:8px;height:1px;background:#4a6327;"></div>
<div class="a" style="left:116px;top:612.33px;width:8px;height:1px;background:#4a6327;"></div>
<div class="a" style="left:116px;top:637.0px;width:8px;height:1px;background:#4a6327;"></div>
<div class="a" style="left:134px;top:143px;width:2px;height:543px;background:#a5a5a5;"></div>
<div class="a" style="left:127px;top:221px;width:15px;height:15px;border:1.5px solid #a5a5a5;background:#1e1e1e"></div>
<div class="a" style="left:131px;top:227.5px;width:7px;height:2px;background:#e0e0e0;"></div>
<div class="a" style="left:127px;top:320px;width:15px;height:15px;border:1.5px solid #a5a5a5;background:#1e1e1e"></div>
<div class="a" style="left:131px;top:326.5px;width:7px;height:2px;background:#e0e0e0;"></div>
<div class="a" style="left:127px;top:542px;width:15px;height:15px;border:1.5px solid #a5a5a5;background:#1e1e1e"></div>
<div class="a" style="left:131px;top:548.5px;width:7px;height:2px;background:#e0e0e0;"></div>
<div class="a" style="left:136px;top:190px;width:6px;height:2px;background:#a5a5a5;"></div>
<div class="a" style="left:136px;top:289px;width:6px;height:2px;background:#a5a5a5;"></div>
<div class="a" style="left:136px;top:511px;width:6px;height:2px;background:#a5a5a5;"></div>
<div class="a" style="left:136px;top:635px;width:6px;height:2px;background:#a5a5a5;"></div>
<div class="a" style="left:136px;top:659px;width:6px;height:2px;background:#a5a5a5;"></div>
<div class="a" style="left:136px;top:684px;width:6px;height:2px;background:#a5a5a5;"></div>
<div class="a" style="left:148px;top:143px;width:2px;height:513px;background-image:linear-gradient(#7c7c7c 55%,transparent 55%);background-size:2px 8px"></div>
<div class="a" style="left:189px;top:143px;width:2px;height:489px;background-image:linear-gradient(#7c7c7c 55%,transparent 55%);background-size:2px 8px"></div>
<div class="a" style="left:229px;top:143px;width:2px;height:20px;background-image:linear-gradient(#7c7c7c 55%,transparent 55%);background-size:2px 8px"></div>
<div class="a" style="left:229px;top:365px;width:2px;height:121px;background-image:linear-gradient(#7c7c7c 55%,transparent 55%);background-size:2px 8px"></div>
<div class="a" style="left:229px;top:583px;width:2px;height:25px;background-image:linear-gradient(#7c7c7c 55%,transparent 55%);background-size:2px 8px"></div>
<div class="a" style="left:143px;top:364px;width:648px;height:24px;border:2px solid #464646;border-right:none"></div>
<svg class="a" style="left:86px;top:364px;overflow:visible" width="26" height="26" viewBox="0 0 26 26"><g transform="translate(11.7,12.3) rotate(-47)"><path d="M-1.5 -1.8 L8.5 -1.8 L9.5 -3.2 L14 -3.2 Q14.8 0 14 3.2 L9.5 3.2 L8.5 1.8 L-1.5 1.8 Z" fill="#4a4a4a" stroke="#e6e6e6" stroke-width="1.4"/><path d="M-1.5 -4.6 L-10.5 -4.6 Q-14.6 -4.6 -14.6 0 Q-14.6 4.6 -10.5 4.6 L-1.5 4.6 Z" fill="#0f5fb5" stroke="#e6e6e6" stroke-width="1.4"/><path d="M-10 -1.5 H-2.5 M-10 1.5 H-2.5" stroke="#e6e6e6" stroke-width="0.9"/></g></svg>
<div class="code"><div>            InitializeComponent();</div><div>        }</div><div></div><div>        <span class="kw">private</span> <span class="kw">void</span> <span class="me">Form1_Load</span>(<span class="kw">object</span> <span class="pa">sender</span>, <span class="ty">EventArgs</span> <span class="pa">e</span>)</div><div>        {</div><div>        }</div><div></div><div>        <span class="kw">private</span> <span class="kw">void</span> <span class="me">button1_Click</span>(<span class="kw">object</span> <span class="pa">sender</span>, <span class="ty">EventArgs</span> <span class="pa">e</span>)</div><div>        {</div><div>            pictureBox1.Visible = <span class="kw">true</span>;</div><div>            <span class="ty">OpenFileDialog</span> <span class="pa">openFileDialog</span> = <span class="kw">new</span> <span class="ty">OpenFileDialog</span>();</div><div>            <span class="pa">openFileDialog</span>.<span class="me">ShowDialog</span>();</div><div>            <span class="gr">System.Drawing.</span><span class="ty">Image</span> <span class="pa">img</span> = <span class="gr">System.Drawing.</span><span class="ty">Image</span>.<span class="me">FromFile</span>(<span class="pa">openFileDialog</span>.FileName);</div><div>            pictureBox1.Image = <span class="pa">img</span>;</div><div>        }</div><div></div><div>        <span class="kw">private</span> <span class="kw">void</span> <span class="me">button2_Click</span>(<span class="kw">object</span> <span class="pa">sender</span>, <span class="ty">EventArgs</span> <span class="pa">e</span>)</div><div>        {</div><div>            pictureBox1.Visible = <span class="kw">false</span>;</div><div>        }</div><div>    }</div><div>}</div></div>
<svg class="a" style="left:357px;top:335px;" width="16" height="3" viewBox="0 0 16 3"><rect x="0" y="0" width="2" height="2" fill="#a0a0a0"/><rect x="6" y="0" width="2" height="2" fill="#a0a0a0"/><rect x="12" y="0" width="2" height="2" fill="#a0a0a0"/></svg>
<svg class="a" style="left:357px;top:557px;" width="16" height="3" viewBox="0 0 16 3"><rect x="0" y="0" width="2" height="2" fill="#a0a0a0"/><rect x="6" y="0" width="2" height="2" fill="#a0a0a0"/><rect x="12" y="0" width="2" height="2" fill="#a0a0a0"/></svg>
<div class="a" style="left:1673px;top:143px;width:20px;height:553px;background:#3e3e42;"></div>
<svg class="a" style="left:1677px;top:150px;" width="12" height="7" viewBox="0 0 12 7"><path d="M0 7 L6 0 L12 7Z" fill="#999"/></svg>
<svg class="a" style="left:1677px;top:683px;" width="12" height="7" viewBox="0 0 12 7"><path d="M0 0 L6 7 L12 0Z" fill="#999"/></svg>
<div class="a" style="left:1674px;top:196px;width:5px;height:45px;background:#57732d;"></div>
<div class="a" style="left:1676px;top:318px;width:11px;height:178px;background:#686868;"></div>
<div class="a" style="left:1674px;top:325px;width:4px;height:170px;background:#57732d;"></div>
<div class="a" style="left:1686px;top:373px;width:5px;height:7px;background:#999;"></div>
<div class="a" style="left:1686px;top:441px;width:5px;height:7px;background:#999;"></div>
<div class="a" style="left:1673px;top:388px;width:20px;height:2px;background:#e0e0e0;"></div>
<div class="a" style="left:1662px;top:365px;width:11px;height:24px;border:2px solid #464646;border-left:none"></div>
<div class="a" style="left:6px;top:696px;width:1687px;height:19px;background:#3e3e42;"></div>
<div class="a" style="left:7px;top:697px;width:59px;height:17px;background:#333337;"></div>
<div class="a" style="left:10px;top:700.69px;font-size:11px;line-height:11px;color:#f1f1f1;">154 %</div>
<svg class="a" style="left:58px;top:704px;" width="6" height="4" viewBox="0 0 6 4"><path d="M0 0 H6 L3 3.5Z" fill="#f1f1f1"/></svg>
<svg class="a" style="left:90px;top:698px;" width="14" height="14" viewBox="0 0 14 14"><circle cx="7" cy="7" r="6.2" fill="#1f9f3f" stroke="#e0e0e0" stroke-width="1"/><path d="M3.8 7.2 L6 9.4 L10.3 4.8" fill="none" stroke="#fff" stroke-width="1.6"/></svg>
<div class="a" style="left:106px;top:700.69px;font-size:11px;line-height:11px;color:#f1f1f1;">未找到相关问题</div>
<div class="a" style="left:251px;top:698px;width:1px;height:15px;background:#c5c5c5;"></div>
<svg class="a" style="left:266px;top:699px;" width="13" height="12" viewBox="0 0 13 12"><path d="M2 4 L8 10 L10 8 L4 2Z" fill="none" stroke="#c5c5c5" stroke-width="1.2"/><path d="M7 3 L11 0" stroke="#c5c5c5" stroke-width="1.5"/></svg>
<svg class="a" style="left:283px;top:704px;" width="6" height="4" viewBox="0 0 6 4"><path d="M0 0 H6 L3 3.5Z" fill="#f1f1f1"/></svg>
<svg class="a" style="left:320px;top:700px;" width="5" height="9" viewBox="0 0 5 9"><path d="M5 0 V9 L0 4.5Z" fill="#5a5a5a"/></svg>
<div class="a" style="left:1664px;top:700.69px;font-size:11px;line-height:11px;color:#c8c8c8;"><span style="letter-spacing:0.35px">RLF</span></div>
<div class="a" style="left:6px;top:721px;width:839px;height:254px;background:#2a2a2c;border:1px solid #3f3f46;"></div>
<div class="a" style="left:7px;top:722px;width:837px;height:23px;background:#2d2d30;"></div>
<div class="a" style="left:11px;top:727.84px;font-size:12px;line-height:12px;color:#f1f1f1;">局部变量</div>
<div class="a" style="left:68px;top:731px;width:718px;height:5px;background-image:radial-gradient(#46464a 40%,transparent 45%);background-size:3px 3px"></div>
<svg class="a" style="left:791px;top:731px;" width="8" height="6" viewBox="0 0 8 6"><path d="M0 0 H8 L4 5Z" fill="#c5c5c5"/></svg>
<svg class="a" style="left:808px;top:729px;" width="9" height="10" viewBox="0 0 9 10"><path d="M1 4 H8 M4.5 4 V10 M2.5 0.5 H6.5 V4" fill="none" stroke="#c5c5c5" stroke-width="1.2"/></svg>
<svg class="a" style="left:825px;top:729px;" width="10" height="10" viewBox="0 0 10 10"><path d="M1 1 L9 9 M9 1 L1 9" stroke="#c5c5c5" stroke-width="1.5"/></svg>
<div class="a" style="left:7px;top:745px;width:225px;height:23px;background:#333337;border:1px solid #3f3f46;border-right:none"></div>
<div class="a" style="left:12px;top:750.84px;font-size:12px;line-height:12px;color:#999999;">搜索<span style="letter-spacing:0.35px">(Ctrl+E)</span></div>
<svg class="a" style="left:203px;top:749px;" width="14" height="14" viewBox="0 0 14 14"><circle cx="8.5" cy="5.5" r="4" fill="none" stroke="#f1f1f1" stroke-width="1.8"/><path d="M5.8 8.2 L1.5 12.5" stroke="#f1f1f1" stroke-width="2.2"/></svg>
<div class="a" style="left:219px;top:745px;width:13px;height:23px;background:#3f3f46;"></div>
<svg class="a" style="left:222px;top:755px;" width="6" height="4" viewBox="0 0 6 4"><path d="M0 0 H6 L3 3.5Z" fill="#f1f1f1"/></svg>
<svg class="a" style="left:239px;top:751px;" width="16" height="12" viewBox="0 0 16 12"><path d="M15 6 H2 M7 1 L2 6 L7 11" fill="none" stroke="#5a5a5a" stroke-width="1.6"/></svg>
<svg class="a" style="left:261px;top:751px;" width="16" height="12" viewBox="0 0 16 12"><path d="M1 6 H14 M9 1 L14 6 L9 11" fill="none" stroke="#5a5a5a" stroke-width="1.6"/></svg>
<div class="a" style="left:283px;top:751.34px;font-size:12px;line-height:12px;color:#656565;">搜索深度<span style="letter-spacing:0.35px">:</span></div>
<div class="a" style="left:340px;top:748px;width:39px;height:20px;border:1px solid #3f3f46;"></div>
<div class="a" style="left:344px;top:751.34px;font-size:12px;line-height:12px;color:#656565;"><span style="letter-spacing:0.35px">3</span></div>
<svg class="a" style="left:369px;top:757px;" width="6" height="4" viewBox="0 0 6 4"><path d="M0 0 H6 L3 3.5Z" fill="#444"/></svg>
<div class="a" style="left:7px;top:768px;width:819px;height:25px;background:#2a2a2c;"></div>
<div class="a" style="left:7px;top:792px;width:819px;height:1px;background:#333337;"></div>
<div class="a" style="left:14px;top:769px;width:1px;height:23px;background:#333337;"></div>
<div class="a" style="left:285px;top:769px;width:1px;height:23px;background:#333337;"></div>
<div class="a" style="left:690px;top:769px;width:1px;height:23px;background:#333337;"></div>
<div class="a" style="left:21px;top:774.84px;font-size:12px;line-height:12px;color:#999999;">名称</div>
<div class="a" style="left:290px;top:774.84px;font-size:12px;line-height:12px;color:#999999;">值</div>
<div class="a" style="left:697px;top:774.84px;font-size:12px;line-height:12px;color:#999999;">类型</div>
<div class="a" style="left:826px;top:771px;width:18px;height:203px;background:#3e3e42;"></div>
<svg class="a" style="left:829px;top:778px;" width="12" height="6" viewBox="0 0 12 6"><path d="M0 6 L6 0 L12 6Z" fill="#5a5a5a"/></svg>
<svg class="a" style="left:829px;top:963px;" width="12" height="6" viewBox="0 0 12 6"><path d="M0 0 L6 6 L12 0Z" fill="#5a5a5a"/></svg>
<div class="a" style="left:850px;top:721px;width:843px;height:254px;background:#252526;border:1px solid #3f3f46;"></div>
<div class="a" style="left:850px;top:722px;width:843px;height:23px;background:#007acc;"></div>
<div class="a" style="left:856px;top:728.84px;font-size:12px;line-height:12px;color:#ffffff;">输出</div>
<div class="a" style="left:890px;top:731px;width:750px;height:5px;background-image:radial-gradient(#3a93d6 40%,transparent 45%);background-size:3px 3px"></div>
<svg class="a" style="left:1642px;top:731px;" width="8" height="6" viewBox="0 0 8 6"><path d="M0 0 H8 L4 5Z" fill="#ffffff"/></svg>
<svg class="a" style="left:1658px;top:727px;" width="9" height="12" viewBox="0 0 9 12"><path d="M0 6.5 H9 M4.5 6.5 V12" stroke="#fff" stroke-width="1.2"/><rect x="2" y="0.5" width="5" height="6" fill="none" stroke="#fff" stroke-width="1.2"/><rect x="5" y="1" width="1.5" height="5" fill="#fff"/></svg>
<svg class="a" style="left:1675px;top:728px;" width="11" height="11" viewBox="0 0 11 11"><path d="M1 1 L10 10 M10 1 L1 10" stroke="#fff" stroke-width="1.8"/></svg>
<div class="a" style="left:851px;top:745px;width:841px;height:26px;background:#2d2d30;"></div>
<div class="a" style="left:858px;top:751.34px;font-size:12px;line-height:12px;color:#f1f1f1;">显示输出来源<span style="letter-spacing:0.35px">(S):</span></div>
<div class="a" style="left:954px;top:748px;width:300px;height:20px;background:#333337;border:1px solid #3f3f46;"></div>
<div class="a" style="left:958px;top:751.34px;font-size:12px;line-height:12px;color:#f1f1f1;">调试</div>
<svg class="a" style="left:1242px;top:756px;" width="6" height="4" viewBox="0 0 6 4"><path d="M0 0 H6 L3 3.5Z" fill="#999"/></svg>
<div class="a" style="left:1262px;top:749px;width:1px;height:18px;background:#3f3f46;"></div>
<svg class="a" style="left:1268px;top:750px;" width="14" height="14" viewBox="0 0 14 14"><path d="M6 1 L2 5 L6 9 M2 5 H9 M5 10 H14 M5 13 H14" fill="none" stroke="#5a5a5a" stroke-width="1.3"/></svg>
<div class="a" style="left:1288px;top:749px;width:1px;height:18px;background:#3f3f46;"></div>
<svg class="a" style="left:1297px;top:750px;" width="14" height="14" viewBox="0 0 14 14"><path d="M6 1 L2 5 L6 9 M2 5 H9 M5 10 H14 M5 13 H14" fill="none" stroke="#5a5a5a" stroke-width="1.3"/></svg>
<svg class="a" style="left:1319px;top:750px;" width="14" height="14" viewBox="0 0 14 14"><path d="M8 1 L12 5 L8 9 M12 5 H5 M0 10 H9 M0 13 H9" fill="none" stroke="#5a5a5a" stroke-width="1.3"/></svg>
<div class="a" style="left:1342px;top:749px;width:1px;height:18px;background:#3f3f46;"></div>
<svg class="a" style="left:1350px;top:750px;" width="15" height="14" viewBox="0 0 15 14"><path d="M5 2 H15 M5 6 H15 M3 10 H15 M3 13.5 H15" stroke="#d0d0d0" stroke-width="1.8"/><path d="M0 0 L4 4 M4 0 L0 4" stroke="#e51400" stroke-width="1.5"/></svg>
<div class="a" style="left:1370px;top:749px;width:1px;height:18px;background:#3f3f46;"></div>
<div class="a" style="left:1377px;top:747px;width:23px;height:22px;border:1px solid #3399ff;"></div>
<svg class="a" style="left:1380px;top:750px;" width="17" height="15" viewBox="0 0 17 15"><text x="0" y="6" font-size="7" fill="#c5c5c5" font-family="Liberation Sans">ab</text><text x="0" y="13" font-size="7" fill="#c5c5c5" font-family="Liberation Sans">c</text><path d="M15 4 V10 H7 M10 7 L7 10 L10 13" fill="none" stroke="#d0d0d0" stroke-width="1.6"/></svg>
<div class="a" style="left:851px;top:771px;width:824px;height:189px;overflow:hidden">
<div class="out" style="left:11.5px;top:-7px"><i>“</i><b>TestIC00.exe</b><i>”</i><b>(CLR v4.0.30319: TestIC00.exe): </b><i>已</i><i>加</i><i>载</i><i>“</i><b>C:\WINDOWS\Microsoft.Net\assembly\GAC_MSIL\System.Windows.Forms</b></div>
<div class="out" style="left:11.5px;top:8px"><b>  \v4.0_4.0.0.0__b77a5c561934e089\System.Windows.Forms.dll</b><i>”</i><i>。</i><i>已</i><i>跳</i><i>过</i><i>加</i><i>载</i><i>符</i><i>号</i><i>。</i><i>模</i><i>块</i><i>进</i><i>行</i><i>了</i><i>优</i><i>化</i><i>，</i><i>并</i><i>且</i><i>调</i><i>试</i><i>器</i><i>选</i><i>项</i><i>“</i><i>仅</i><i>我</i><i>的</i><i>代</i><i>码</i><i>”</i><i>已</i><i>启</i><i>用</i><i>。</i></div>
<div class="out" style="left:11.5px;top:23px"><i>“</i><b>TestIC00.exe</b><i>”</i><b>(CLR v4.0.30319: TestIC00.exe): </b><i>已</i><i>加</i><i>载</i><i>“</i><b>C:\WINDOWS\Microsoft.Net\assembly\GAC_MSIL\System</b></div>
<div class="out" style="left:11.5px;top:38px"><b>  \v4.0_4.0.0.0__b77a5c561934e089\System.dll</b><i>”</i><i>。</i><i>已</i><i>跳</i><i>过</i><i>加</i><i>载</i><i>符</i><i>号</i><i>。</i><i>模</i><i>块</i><i>进</i><i>行</i><i>了</i><i>优</i><i>化</i><i>，</i><i>并</i><i>且</i><i>调</i><i>试</i><i>器</i><i>选</i><i>项</i><i>“</i><i>仅</i><i>我</i><i>的</i><i>代</i><i>码</i><i>”</i><i>已</i><i>启</i><i>用</i><i>。</i></div>
<div class="out" style="left:11.5px;top:53px"><i>“</i><b>TestIC00.exe</b><i>”</i><b>(CLR v4.0.30319: TestIC00.exe): </b><i>已</i><i>加</i><i>载</i><i>“</i><b>C:\WINDOWS\Microsoft.Net\assembly\GAC_MSIL\System.Drawing</b></div>
<div class="out" style="left:11.5px;top:68px"><b>  \v4.0_4.0.0.0__b03f5f7f11d50a3a\System.Drawing.dll</b><i>”</i><i>。</i><i>已</i><i>跳</i><i>过</i><i>加</i><i>载</i><i>符</i><i>号</i><i>。</i><i>模</i><i>块</i><i>进</i><i>行</i><i>了</i><i>优</i><i>化</i><i>，</i><i>并</i><i>且</i><i>调</i><i>试</i><i>器</i><i>选</i><i>项</i><i>“</i><i>仅</i><i>我</i><i>的</i><i>代</i><i>码</i><i>”</i><i>已</i><i>启</i><i>用</i><i>。</i></div>
<div class="out" style="left:11.5px;top:83px"><i>“</i><b>TestIC00.exe</b><i>”</i><b>(CLR v4.0.30319: TestIC00.exe): </b><i>已</i><i>加</i><i>载</i><i>“</i><b>C:\WINDOWS\Microsoft.Net\assembly\GAC_MSIL\System.Configuration</b></div>
<div class="out" style="left:11.5px;top:98px"><b>  \v4.0_4.0.0.0__b03f5f7f11d50a3a\System.Configuration.dll</b><i>”</i><i>。</i><i>已</i><i>跳</i><i>过</i><i>加</i><i>载</i><i>符</i><i>号</i><i>。</i><i>模</i><i>块</i><i>进</i><i>行</i><i>了</i><i>优</i><i>化</i><i>，</i><i>并</i><i>且</i><i>调</i><i>试</i><i>器</i><i>选</i><i>项</i><i>“</i><i>仅</i><i>我</i><i>的</i><i>代</i><i>码</i><i>”</i><i>已</i><i>启</i><i>用</i><i>。</i></div>
<div class="out" style="left:11.5px;top:113px"><i>“</i><b>TestIC00.exe</b><i>”</i><b>(CLR v4.0.30319: TestIC00.exe): </b><i>已</i><i>加</i><i>载</i><i>“</i><b>C:\WINDOWS\Microsoft.Net\assembly\GAC_MSIL\System.Core</b></div>
<div class="out" style="left:11.5px;top:128px"><b>  \v4.0_4.0.0.0__b77a5c561934e089\System.Core.dll</b><i>”</i><i>。</i><i>已</i><i>跳</i><i>过</i><i>加</i><i>载</i><i>符</i><i>号</i><i>。</i><i>模</i><i>块</i><i>进</i><i>行</i><i>了</i><i>优</i><i>化</i><i>，</i><i>并</i><i>且</i><i>调</i><i>试</i><i>器</i><i>选</i><i>项</i><i>“</i><i>仅</i><i>我</i><i>的</i><i>代</i><i>码</i><i>”</i><i>已</i><i>启</i><i>用</i><i>。</i></div>
<div class="out" style="left:11.5px;top:143px"><i>“</i><b>TestIC00.exe</b><i>”</i><b>(CLR v4.0.30319: TestIC00.exe): </b><i>已</i><i>加</i><i>载</i><i>“</i><b>C:\WINDOWS\Microsoft.Net\assembly\GAC_MSIL\System.Xml</b></div>
<div class="out" style="left:11.5px;top:158px"><b>  \v4.0_4.0.0.0__b77a5c561934e089\System.Xml.dll</b><i>”</i><i>。</i><i>已</i><i>跳</i><i>过</i><i>加</i><i>载</i><i>符</i><i>号</i><i>。</i><i>模</i><i>块</i><i>进</i><i>行</i><i>了</i><i>优</i><i>化</i><i>，</i><i>并</i><i>且</i><i>调</i><i>试</i><i>器</i><i>选</i><i>项</i><i>“</i><i>仅</i><i>我</i><i>的</i><i>代</i><i>码</i><i>”</i><i>已</i><i>启</i><i>用</i><i>。</i></div>
</div>
<div class="a" style="left:1674px;top:771px;width:18px;height:188px;background:#3e3e42;"></div>
<svg class="a" style="left:1678px;top:776px;" width="11" height="6" viewBox="0 0 11 6"><path d="M0 6 L5.5 0 L11 6Z" fill="#999"/></svg>
<svg class="a" style="left:1678px;top:948px;" width="11" height="6" viewBox="0 0 11 6"><path d="M0 0 L5.5 6 L11 0Z" fill="#999"/></svg>
<div class="a" style="left:1678px;top:812px;width:11px;height:89px;background:#686868;"></div>
<div class="a" style="left:1675px;top:900px;width:17px;height:2px;background:#e0e0e0;"></div>
<div class="a" style="left:851px;top:959px;width:841px;height:15px;background:#3e3e42;"></div>
<svg class="a" style="left:857px;top:963px;" width="5" height="9" viewBox="0 0 5 9"><path d="M5 0 V9 L0 4.5Z" fill="#5a5a5a"/></svg>
<svg class="a" style="left:1663px;top:963px;" width="5" height="9" viewBox="0 0 5 9"><path d="M0 0 V9 L5 4.5Z" fill="#5a5a5a"/></svg>
<div class="a" style="left:6px;top:983.84px;font-size:12px;line-height:12px;color:#f1f1f1;">断点</div>
<div class="a" style="left:6px;top:1001px;width:24px;height:5px;background:#3f3f46;"></div>
<div class="a" style="left:42px;top:983.84px;font-size:12px;line-height:12px;color:#f1f1f1;">命令窗口</div>
<div class="a" style="left:42px;top:1001px;width:48px;height:5px;background:#3f3f46;"></div>
<div class="a" style="left:102px;top:983.84px;font-size:12px;line-height:12px;color:#f1f1f1;">即时窗口</div>
<div class="a" style="left:102px;top:1001px;width:48px;height:5px;background:#3f3f46;"></div>
<div class="a" style="left:162px;top:983.84px;font-size:12px;line-height:12px;color:#f1f1f1;">错误列表</div>
<div class="a" style="left:162px;top:1001px;width:48px;height:5px;background:#3f3f46;"></div>
<div class="a" style="left:0px;top:1007px;width:1920px;height:24.5px;background:#ca5100;"></div>
<svg class="a" style="left:5px;top:1013px;" width="15" height="13" viewBox="0 0 15 13"><path d="M3.5 0.8 H14.2 L11.5 12.2 H0.8Z" fill="none" stroke="#fff" stroke-width="1.3"/></svg>
<div class="a" style="left:28px;top:1013.84px;font-size:12px;line-height:12px;color:#ffffff;">就绪</div>
<svg class="a" style="left:1731px;top:1013px;" width="9" height="12" viewBox="0 0 9 12"><path d="M4.5 12 V1.5 M1 5 L4.5 1.5 L8 5" fill="none" stroke="#fff" stroke-width="1.5"/></svg>
<div class="a" style="left:1750px;top:1013.84px;font-size:12px;line-height:12px;color:#ffffff;">添加到源代码管理</div>
<svg class="a" style="left:1852px;top:1016px;" width="8" height="5" viewBox="0 0 8 5"><path d="M0 5 L4 0 L8 5Z" fill="#fff"/></svg>
<svg class="a" style="left:1878px;top:1010px;" width="24" height="22" viewBox="0 0 24 22"><path d="M5 12 V7 A5 5 0 0 1 15 7 V12 L17 14 H3Z M8 15.5 A2.2 2.2 0 0 0 12 15.5" fill="#c8c8c8"/><circle cx="17" cy="15.5" r="5.5" fill="#fff" stroke="#ca5100" stroke-width="0.8"/><text x="14.8" y="19" font-size="9" fill="#000" font-family="Liberation Sans">1</text></svg>
<div class="a" style="left:0;top:1031.5px;width:1920px;height:9px;background:linear-gradient(90deg,#efe4ee,#f1e8ec 50%,#efe3ea)"></div>
<div class="a" style="left:1730px;top:991.76px;font-size:18px;line-height:18px;color:rgba(135,135,135,0.75);text-shadow:0 0 1px rgba(0,0,0,0.6);"><span style="letter-spacing:0.35px">@</span>稀土掘金技术社区</div>
<div class="a" style="left:1699px;top:99px;width:189px;height:876px;background:#252526;border:1px solid #3f3f46;"></div>
<div class="a" style="left:1700px;top:100px;width:187px;height:22px;background:#2d2d30;"></div>
<div class="a" style="left:1705px;top:105.84px;font-size:12px;line-height:12px;color:#f1f1f1;">属性</div>
<div class="a" style="left:1736px;top:108px;width:92px;height:5px;background-image:radial-gradient(#46464a 40%,transparent 45%);background-size:3px 3px"></div>
<svg class="a" style="left:1835px;top:109px;" width="8" height="6" viewBox="0 0 8 6"><path d="M0 0 H8 L4 5Z" fill="#f1f1f1"/></svg>
<svg class="a" style="left:1852px;top:104px;" width="9" height="12" viewBox="0 0 9 12"><path d="M0 6.5 H9 M4.5 6.5 V12" stroke="#f1f1f1" stroke-width="1.2"/><rect x="2" y="0.5" width="5" height="6" fill="none" stroke="#f1f1f1" stroke-width="1.2"/><rect x="5" y="1" width="1.5" height="5" fill="#f1f1f1"/></svg>
<svg class="a" style="left:1869px;top:106px;" width="11" height="11" viewBox="0 0 11 11"><path d="M1 1 L10 10 M10 1 L1 10" stroke="#f1f1f1" stroke-width="1.8"/></svg>
<div class="a" style="left:1700px;top:123px;width:187px;height:24px;background:#333337;"></div>
<svg class="a" style="left:1877px;top:134px;" width="6" height="4" viewBox="0 0 6 4"><path d="M0 0 H6 L3 3.5Z" fill="#f1f1f1"/></svg>
<div class="a" style="left:1700px;top:147px;width:187px;height:27px;background:#2d2d30;"></div>
<svg class="a" style="left:1707px;top:153px;" width="15" height="14" viewBox="0 0 15 14"><rect x="0.5" y="0.5" width="5" height="5" fill="#ddd"/><rect x="0.5" y="8.5" width="5" height="5" fill="#ddd"/><path d="M7 1 H15 M7 3.5 H15 M7 9 H15 M7 11.5 H15 M2 3 H4 M2 11 H4 M3 2 V4 M3 10 V12" stroke="#aaa" stroke-width="1"/></svg>
<div class="a" style="left:1726px;top:149px;width:23px;height:22px;border:1px solid #3399ff;"></div>
<svg class="a" style="left:1729px;top:151px;" width="18" height="18" viewBox="0 0 18 18"><text x="1" y="8" font-size="8" fill="#ddd" font-family="Liberation Sans" font-weight="bold">A</text><text x="1" y="16" font-size="8" fill="#ddd" font-family="Liberation Sans" font-weight="bold">Z</text><path d="M13 2 V14 M9.5 10.5 L13 14 L16.5 10.5" fill="none" stroke="#3399ff" stroke-width="2"/></svg>
<div class="a" style="left:1752px;top:150px;width:1px;height:20px;background:#3f3f46;"></div>
<svg class="a" style="left:1757px;top:151px;" width="18" height="18" viewBox="0 0 18 18"><circle cx="12" cy="6" r="4.5" fill="#8a8a8a"/><circle cx="13" cy="5" r="1.5" fill="#2d2d30"/><path d="M9 9 L2 16 M4 14 L6 16" stroke="#8a8a8a" stroke-width="3"/></svg>
<div class="a" style="left:1700px;top:911px;width:187px;height:1px;background:#333337;"></div>
<div class="a" style="left:1889px;top:99px;width:31px;height:877px;background:#2d2d30;"></div>
<div class="a" style="left:1896px;top:98.5px;font-size:12px;line-height:12px;color:#f1f1f1;transform:rotate(90deg)">解</div>
<div class="a" style="left:1896px;top:110.5px;font-size:12px;line-height:12px;color:#f1f1f1;transform:rotate(90deg)">决</div>
<div class="a" style="left:1896px;top:122.5px;font-size:12px;line-height:12px;color:#f1f1f1;transform:rotate(90deg)">方</div>
<div class="a" style="left:1896px;top:134.5px;font-size:12px;line-height:12px;color:#f1f1f1;transform:rotate(90deg)">案</div>
<div class="a" style="left:1896px;top:146.5px;font-size:12px;line-height:12px;color:#f1f1f1;transform:rotate(90deg)">资</div>
<div class="a" style="left:1896px;top:158.5px;font-size:12px;line-height:12px;color:#f1f1f1;transform:rotate(90deg)">源</div>
<div class="a" style="left:1896px;top:170.5px;font-size:12px;line-height:12px;color:#f1f1f1;transform:rotate(90deg)">管</div>
<div class="a" style="left:1896px;top:182.5px;font-size:12px;line-height:12px;color:#f1f1f1;transform:rotate(90deg)">理</div>
<div class="a" style="left:1896px;top:194.5px;font-size:12px;line-height:12px;color:#f1f1f1;transform:rotate(90deg)">器</div>
<div class="a" style="left:1914px;top:99px;width:6px;height:108px;background:#3e3e42;"></div>
<div class="a" style="left:791px;top:225px;width:872px;height:508px;background:#f0f0f0;border-radius:8px;box-shadow:0 6px 28px rgba(0,0,0,0.55);overflow:hidden">
<div class="a" style="left:0;top:0;width:872px;height:30px;background:#ffffff"></div>
</div>
<svg class="a" style="left:800px;top:232px;" width="14" height="14" viewBox="0 0 14 14"><rect x="0.5" y="0.5" width="13" height="13" fill="#fff" stroke="#c8c8c8"/><rect x="6" y="1.5" width="7" height="6.5" fill="#f5c518" stroke="#c08a00" stroke-width="0.8"/><rect x="1.5" y="5.5" width="4" height="5" fill="#c41e1e"/><rect x="6" y="9" width="6" height="3.5" fill="#3a7ad8"/></svg>
<div class="a" style="left:820px;top:234.34px;font-size:12px;line-height:12px;color:#000000;"><span style="letter-spacing:0.35px">Form1</span></div>
<div class="a" style="left:1544px;top:239px;width:11px;height:1px;background:#000;"></div>
<div class="a" style="left:1589px;top:233px;width:11px;height:11px;border:1px solid #000;border-radius:1px;"></div>
<svg class="a" style="left:1635px;top:234px;" width="10" height="10" viewBox="0 0 10 10"><path d="M0.5 0.5 L9.5 9.5 M9.5 0.5 L0.5 9.5" stroke="#000" stroke-width="1.1"/></svg>
<div class="a" style="left:803px;top:267px;width:240px;height:240px;background:#ffffff;"></div>
<div class="a" style="left:868px;top:288.38px;font-size:22px;line-height:22px;color:#1a1a1a;-webkit-text-stroke:0.3px #1a1a1a;">单身没关系</div>
<div class="a" style="left:812.5px;top:468.32px;font-size:20.3px;line-height:20.3px;color:#1a1a1a;-webkit-text-stroke:0.3px #1a1a1a;letter-spacing:0.45px;">以后单身的日子还长着呢</div>
<div class="a" style="left:855px;top:330px;width:140px;height:125px;background:radial-gradient(ellipse at 50% 50%,rgba(0,0,0,0.07),rgba(0,0,0,0.03) 55%,transparent 72%)"></div>
<svg class="a" style="left:840px;top:320px;" width="160" height="140" viewBox="0 0 160 140"><g fill="none" stroke="#222" stroke-width="2.4" stroke-linecap="round" stroke-linejoin="round" transform="translate(-840,-320)">
<circle cx="935" cy="349" r="16.5"/>
<circle cx="877.7" cy="376.5" r="15"/>
<path d="M950.4 369.8 Q930 378 904.6 379.2 L894.5 377.9"/>
<path d="M947.7 364.4 L951 370 Q958 384 961.1 395.4 L962.5 407.5"/>
<path d="M951.7 369.8 Q962 374 967.9 379.2 Q972 385 973.2 391.3 L975.9 408.8 L985.4 411.5"/>
<path d="M962.5 407.5 L926.1 406.1 L897.9 404.8"/>
<path d="M962.5 407.5 L947.7 420.9 L936.9 430.4 L930.2 447.9"/>
<path d="M926.1 406.1 L920.8 411.5 L914 442.5"/>
<path d="M906 379.2 L908.6 403.4"/>
<path d="M906 379.2 L926.1 391.3 L932.9 401.4 L897.9 404.8"/>
<path d="M871 390 L881.7 410.2 L891.1 404.8 L906 379.2"/>
<path d="M883 387.3 L900.6 408.8 L904.6 411.5"/>
<path d="M881.7 410.2 L873 412.9 L868.9 441.1"/>
<path d="M904.6 411.5 L893.8 414.2 L891.8 449.2"/>
</g></svg>
<div class="a" style="left:1503px;top:268px;width:147px;height:36px;background:#fdfdfd;border:1.5px solid #0067c0;border-radius:3px;"></div>
<div class="a" style="left:1551px;top:280.34px;font-size:12px;line-height:12px;color:#000;">展示图片</div>
<div class="a" style="left:1503px;top:312px;width:147px;height:36px;background:#fbfbfb;border:1px solid #d0d0d0;border-radius:3px;"></div>
<div class="a" style="left:1551px;top:324.34px;font-size:12px;line-height:12px;color:#000;">关闭展示</div>
<svg class="a" style="left:1055px;top:280px;" width="155" height="50" viewBox="0 0 155 50"><path d="M146.5 6.2 L22 33 L20.7 29.2 L7.6 40.5 L24.5 44.7 L25 40.3 Z" fill="#f53333" transform="translate(0,0)"/></svg>
<div class="a" style="left:1199px;top:295.22px;font-size:21px;line-height:21px;color:#f53333;">效果</div>
<svg class="a" style="left:1550px;top:335px;" width="50" height="106" viewBox="0 0 50 106"><path d="M44.6 102.6 L16.5 17.5 L20.5 15 L6.6 2.2 L4.5 20.1 L11.5 18.8 Z" fill="#f53333"/></svg>
<div class="a" style="left:1566px;top:448.22px;font-size:21px;line-height:21px;color:#f53333;">关闭按钮</div>
</body></html>
